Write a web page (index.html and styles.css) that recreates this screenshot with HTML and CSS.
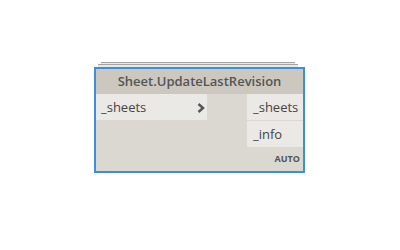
FILE: index.html
```html
<!DOCTYPE html>
<html lang="en">
<head>
    <meta charset="UTF-8">
    <title>Sheet.UpdateLastRevision</title>
    <link rel="stylesheet" href="styles.css">
</head>
<body>
    <div class="canvas">
        <div class="edge edge-back"></div>
        <div class="edge edge-front"></div>
        <div class="node">
            <div class="node-header">Sheet.UpdateLastRevision</div>
            <div class="node-body">
                <div class="inputs">
                    <div class="port in-port">
                        <span>_sheets</span>
                        <svg class="chevron" width="8" height="10" viewBox="0 0 8 10">
                            <path d="M1.5 1 L6 5 L1.5 9" fill="none" stroke="#555" stroke-width="2.4"/>
                        </svg>
                    </div>
                </div>
                <div class="outputs">
                    <div class="port out-port">_sheets</div>
                    <div class="port out-port">_info</div>
                </div>
            </div>
            <div class="node-footer">AUTO</div>
        </div>
    </div>
</body>
</html>
```

FILE: styles.css
```css
body {
    margin: 0;
    background: #ffffff;
    font-family: "Open Sans", "Liberation Sans", sans-serif;
}

.canvas {
    padding: 62px 0 0 94px;
    width: 211px;
}

.edge {
    height: 1px;
    border-top: 1px solid #a4a4a4;
    background: #e9e9e7;
}

.edge-back {
    margin: 0 10px 0 7px;
}

.edge-front {
    height: 2px;
    margin: 0 7px 0 4px;
}

.node {
    border: 2px solid #3f8fd8;
    background: #dbd8d1;
}

.node-header {
    height: 25px;
    line-height: 25px;
    background: #ccc8c0;
    color: #555555;
    font-size: 13px;
    font-weight: 600;
    text-align: center;
}

.node-body {
    display: flex;
    justify-content: space-between;
}

.inputs {
    width: 111px;
}

.outputs {
    width: 56px;
    display: flex;
    flex-direction: column;
    gap: 1px;
}

.port {
    height: 26px;
    box-sizing: border-box;
    padding-top: 1px;
    line-height: 25px;
    background: #ebe9e5;
    color: #444444;
    font-size: 13px;
}

.in-port {
    display: flex;
    justify-content: space-between;
    align-items: center;
    padding-left: 5px;
    padding-right: 2px;
}

.out-port {
    padding-left: 6px;
}

.node-footer {
    text-align: right;
    font-size: 9px;
    font-weight: 700;
    color: #555555;
    padding: 7px 3px 7px 0;
    line-height: 10px;
}
```
